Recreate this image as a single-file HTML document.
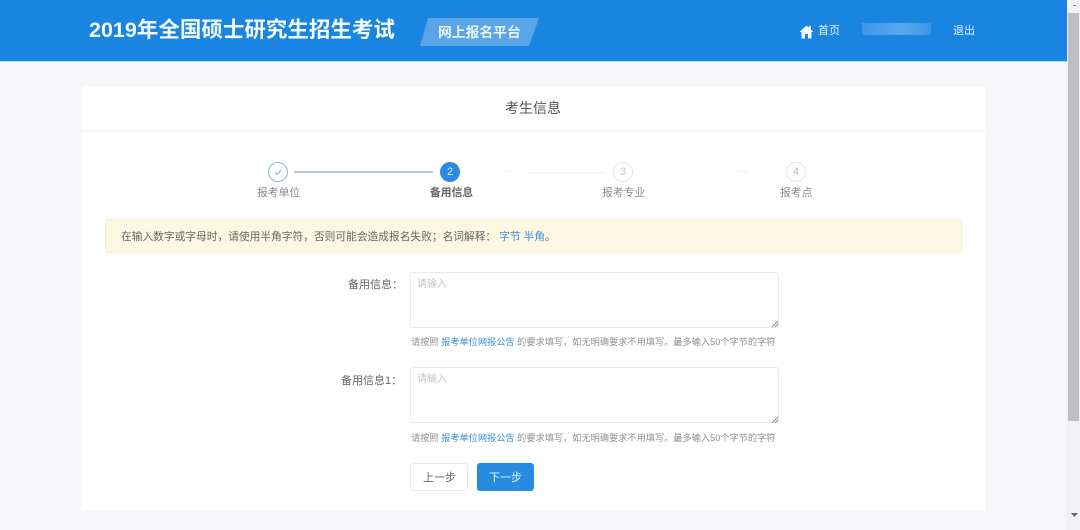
<!DOCTYPE html>
<html lang="zh-CN"><head><meta charset="utf-8"><title>考生信息</title>
<style>
html,body{margin:0;padding:0;width:1080px;height:530px;overflow:hidden;background:#f7f7f9}
body{font-family:"Liberation Sans","Noto Sans CJK SC",sans-serif;position:relative;color:#666}
div,a,span{position:absolute;white-space:nowrap}
a{color:#3b8fd6;text-decoration:none;position:static}
.t{line-height:1;filter:blur(.35px)}
.hd{left:0;top:0;width:1067px;height:62px;background:#1a85e0;border-bottom:1px solid #a8dcf5;box-sizing:border-box}
.card{left:82px;top:86px;width:903px;height:424px;background:#fff}
.c{width:20px;height:20px;border-radius:50%;box-sizing:border-box;text-align:center;font-size:11px;line-height:18px;top:162px}
.ta{left:410px;width:369px;height:56px;box-sizing:border-box;border:1px solid #e9ebee;border-radius:3px;background:#fff}
.ph{font-size:10px;color:#c4c4c4;left:417px;line-height:1;filter:blur(.35px)}
.lb{font-size:11px;color:#666;line-height:1;filter:blur(.3px)}
.hint{left:411px;font-size:9.2px;color:#8f8f8f;line-height:1;filter:blur(.35px)}
.grip{left:771px;width:7px;height:7px}
</style></head><body>
<div class="hd"></div>
<div class="t" style="left:89px;top:20px;font-size:21.5px;font-weight:700;color:#f2fbff">2019年全国硕士研究生招生考试</div>
<svg style="position:absolute;left:420px;top:18px" width="120" height="28"><polygon points="8,0 119,0 109,28 0,28" fill="#5aa5e8"/></svg>
<div class="t" style="left:438px;top:26px;font-size:13.8px;font-weight:700;color:#e8f5ff">网上报名平台</div>
<svg style="position:absolute;left:799px;top:25px" width="15" height="14" viewBox="0 0 15 14"><path d="M7.5 0.5 L10 2.8 L10 1 L12 1 L12 4.6 L14.5 7 L12.5 7 L12.5 13.5 L9 13.5 L9 9 L6 9 L6 13.5 L2.5 13.5 L2.5 7 L0.5 7 Z" fill="#f4fbff"/></svg>
<div class="t" style="left:818px;top:26px;font-size:11px;color:#e4f2ff">首页</div>
<div style="left:862px;top:23px;width:69px;height:12px;background:linear-gradient(90deg,#3f96e6,#5aa8ec 55%,#4d9fe8 80%,#3a93e5)"></div>
<div class="t" style="left:953px;top:26px;font-size:11px;color:#e4f2ff">退出</div>
<div style="left:1067px;top:0;width:13px;height:530px;background:#f1f1f3"></div>
<div style="left:1068px;top:13px;width:11px;height:408px;background:#bfbfc1"></div>
<div style="left:1073px;top:5px;width:3px;height:1px;background:#888"></div>
<svg style="position:absolute;left:1071px;top:512px" width="8" height="6"><polygon points="0,1 7,1 3.5,5" fill="#666"/></svg>
<div class="card"></div>
<div style="left:82px;top:129px;width:903px;height:3px;background:#f8f8f9"></div>
<div class="t" style="left:505px;top:101px;font-size:14px;color:#555">考生信息</div>
<div class="c" style="left:268px;border:1px solid #8fbcc8"></div>
<svg style="position:absolute;left:268px;top:162px" width="20" height="20"><path d="M7 10.5L9.2 12.5L13 8.2" fill="none" stroke="#8fb0bb" stroke-width="1.1"/></svg>
<div style="left:294px;top:171px;width:139px;height:2px;background:#b4c8d2"></div>
<div class="c" style="left:440px;background:#2a8bdc;color:#d8eeff;line-height:20px">2</div>
<div style="left:505px;top:171px;width:7px;height:1px;background:#f1f1f1"></div>
<div style="left:528px;top:172px;width:77px;height:1px;background:#eee"></div>
<div class="c" style="left:613px;border:1px solid #e6e6ea;color:#c6c6c6;line-height:19px">3</div>
<div style="left:737px;top:171px;width:10px;height:1px;background:#f1f1f1"></div>
<div class="c" style="left:786px;border:1px solid #e6e6ea;color:#bcbcbc;line-height:19px">4</div>
<div class="t" style="left:257px;top:188px;font-size:10.8px;color:#8a8a8a">报考单位</div>
<div class="t" style="left:430px;top:188px;font-size:10.8px;font-weight:700;color:#666">备用信息</div>
<div class="t" style="left:602px;top:188px;font-size:10.8px;color:#8a8a8a">报考专业</div>
<div class="t" style="left:780px;top:188px;font-size:10.8px;color:#8a8a8a">报考点</div>
<div style="left:105px;top:219px;width:857px;height:34px;box-sizing:border-box;background:#fef8e3;border:1px solid #f5edcf;border-radius:3px"></div>
<div class="t" style="left:121px;top:232px;font-size:10.72px;color:#666">在输入数字或字母时，请使用半角字符，否则可能会造成报名失败；名词解释： <a>字节 半角</a>。</div>
<div class="lb" style="left:348px;top:280px">备用信息：</div>
<div class="ta" style="top:272px"></div>
<div class="ph" style="top:280px">请输入</div>
<svg class="grip" style="position:absolute;top:320px;left:771px" width="7" height="7"><path d="M1 7L7 1M4 7L7 4" stroke="#888" stroke-width="1"/></svg>
<div class="hint" style="top:338px">请按照 <a>报考单位网报公告</a> 的要求填写，如无明确要求不用填写。最多输入50个字节的字符</div>
<div class="lb" style="left:341px;top:376px">备用信息1：</div>
<div class="ta" style="top:367px"></div>
<div class="ph" style="top:375px">请输入</div>
<svg class="grip" style="position:absolute;top:416px;left:771px" width="7" height="7"><path d="M1 7L7 1M4 7L7 4" stroke="#888" stroke-width="1"/></svg>
<div class="hint" style="top:434px">请按照 <a>报考单位网报公告</a> 的要求填写，如无明确要求不用填写。最多输入50个字节的字符</div>
<div style="left:410px;top:463px;width:58px;height:28px;box-sizing:border-box;border:1px solid #ebebee;border-radius:3px;background:#fff"></div>
<div class="t" style="left:423px;top:473px;font-size:11px;color:#666">上一步</div>
<div style="left:477px;top:463px;width:57px;height:28px;background:#278bdf;border-radius:3px"></div>
<div class="t" style="left:489px;top:473px;font-size:11px;color:#e6f4ff">下一步</div>
</body></html>
